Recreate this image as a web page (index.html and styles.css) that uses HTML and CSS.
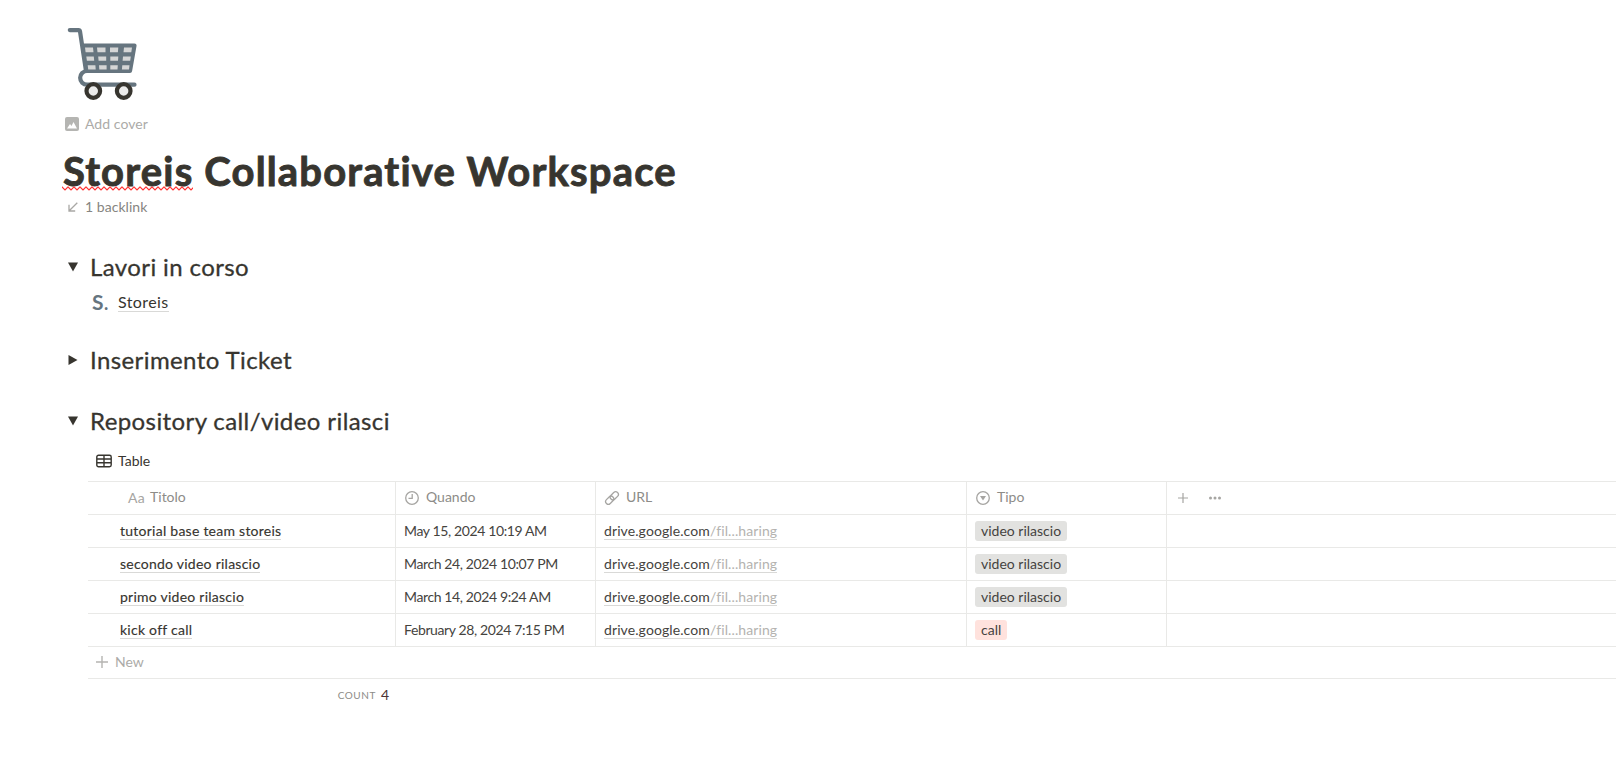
FILE: index.html
```html
<!DOCTYPE html>
<html lang="it">
<head>
<meta charset="utf-8">
<title>Storeis Collaborative Workspace</title>
<link rel="stylesheet" href="styles.css">
</head>
<body>
<main class="page">
  <svg class="cart" viewBox="0 0 76 76" fill="none">
    <path d="M19 20H70.500L66.500 45H21Z" fill="#66757f"/>
    <path d="M5.800 4.100H14.500Q15.800 4.100 16 5.400L22 45M18.500 19.500H70.500L66 45H23A6.850 6.850 0 0 0 23 58.700H70.500" stroke="#66757f" stroke-width="4.200" stroke-linecap="round" stroke-linejoin="round"/>
    <path d="M21 21.500h8l.5 4.800h-7.900zM33 21.500h8.500v4.800h-8zM46 21.500h8.300l-.4 4.800h-7.900zM60 21.500h8l-.7 4.800h-7.800zM22.300 30.400h7.500l.4 4.300h-7.300zM34.200 30.400h8v4.300h-7.600zM46.300 30.400h8l-.3 4.300h-7.700zM59 30.400h7.800l-.6 4.300h-7.600zM23.700 39.200h7.700l.3 4.300h-7.500zM35 39.200h7.600v4.300h-7.300zM46.300 39.200h7.500l-.3 4.300h-7.200zM58.300 39.200h7.200l-.5 4.300h-7.100z" fill="#d5d6d6"/>
    <circle cx="29.300" cy="65" r="6.800" fill="#ebebea" stroke="#37352f" stroke-width="4.200"/>
    <circle cx="59.700" cy="65" r="6.800" fill="#ebebea" stroke="#37352f" stroke-width="4.200"/>
  </svg>

  <div class="cover">
    <svg class="i14" viewBox="0 0 14 14"><rect width="14" height="14" rx="2" fill="#b5b5b2"/><path d="M2 11.500L5 7L6.500 9L8.500 5L12 11.500Z" fill="#fff"/></svg>
    <span>Add cover</span>
  </div>

  <h1 class="title"><span class="typo">Storeis<svg class="wave" viewBox="0 0 131 5" fill="none"><defs><pattern id="zig" width="6" height="5" patternUnits="userSpaceOnUse"><path d="M-1 0L0 1L3 4L6 1L7 0" stroke="#f33" stroke-width="1.200" fill="none"/></pattern></defs><rect width="131" height="5" fill="url(#zig)"/></svg></span> <span class="rest">Collaborative Workspace</span></h1>

  <div class="backlink">
    <svg class="i10" viewBox="0 0 10 10" fill="none" stroke="#a9a8a5" stroke-width="1.300"><path d="M9.300.7L1.200 8.800M1 2.800V9H7.200"/></svg>
    <span>1 backlink</span>
  </div>

  <div class="toggle t1"><svg class="arrow" viewBox="0 0 10 10"><path d="M0 .5H10L5 9.500Z" fill="#37352f"/></svg><h2 class="h">Lavori in corso</h2></div>
  <div class="pagelink"><b class="logo">S<i class="dot">.</i></b><span class="link">Storeis</span></div>
  <div class="toggle t2"><svg class="arrow" viewBox="0 0 10 10"><path d="M.5 0V10L9.500 5Z" fill="#37352f"/></svg><h2 class="h">Inserimento Ticket</h2></div>
  <div class="toggle t3"><svg class="arrow" viewBox="0 0 10 10"><path d="M0 .5H10L5 9.500Z" fill="#37352f"/></svg><h2 class="h">Repository call/video rilasci</h2></div>

  <section class="db">
    <div class="tab">
      <svg class="i16" viewBox="0 0 16 13" fill="none" stroke="#37352f" stroke-width="1.400"><rect x=".8" y=".8" width="14.400" height="11.400" rx="1.700"/><path d="M1 4.500H15M1 8.300H15M8 1V12"/></svg>
      <span>Table</span>
    </div>
    <div class="row head">
      <div class="c c1"><span class="aa">Aa</span><span>Titolo</span></div>
      <div class="c"><svg class="i14" viewBox="0 0 14 14" fill="none" stroke="#a6a5a2" stroke-width="1.300"><circle cx="7" cy="7" r="6.300"/><path d="M7.200 3V7.300H3.500"/></svg><span>Quando</span></div>
      <div class="c link-col"><svg class="i16" viewBox="0 0 16 16" fill="none" stroke="#a6a5a2" stroke-width="1.300"><rect x="-4.600" y="-2.700" width="9.200" height="5.400" rx="2.700" transform="translate(5.700 10.200) rotate(-45)"/><rect x="-4.600" y="-2.700" width="9.200" height="5.400" rx="2.700" transform="translate(10.300 5.800) rotate(-45)"/></svg><span>URL</span></div>
      <div class="c"><svg class="i14" viewBox="0 0 14 14"><circle cx="7" cy="7" r="6.300" fill="none" stroke="#a6a5a2" stroke-width="1.300"/><path d="M4 5H10L7 9.500Z" fill="#a6a5a2"/></svg><span>Tipo</span></div>
      <div class="c tools"><svg class="i10" viewBox="0 0 10 10" stroke="#a6a5a2" stroke-width="1.200"><path d="M5 0V10M0 5H10"/></svg><svg class="dots" viewBox="0 0 12 4" fill="#a6a5a2"><circle cx="1.500" cy="2" r="1.500"/><circle cx="6" cy="2" r="1.500"/><circle cx="10.500" cy="2" r="1.500"/></svg></div>
    </div>
    <div class="row"><div class="c name"><span class="link">tutorial base team storeis</span></div><div class="c date">May 15, 2024 10:19 AM</div><div class="c url"><span class="link">drive.google.com<span class="dim">/fil...haring</span></span></div><div class="c"><span class="tag">video rilascio</span></div><div class="c"></div></div>
    <div class="row"><div class="c name"><span class="link">secondo video rilascio</span></div><div class="c date">March 24, 2024 10:07 PM</div><div class="c url"><span class="link">drive.google.com<span class="dim">/fil...haring</span></span></div><div class="c"><span class="tag">video rilascio</span></div><div class="c"></div></div>
    <div class="row"><div class="c name"><span class="link">primo video rilascio</span></div><div class="c date">March 14, 2024 9:24 AM</div><div class="c url"><span class="link">drive.google.com<span class="dim">/fil...haring</span></span></div><div class="c"><span class="tag">video rilascio</span></div><div class="c"></div></div>
    <div class="row"><div class="c name"><span class="link">kick off call</span></div><div class="c date">February 28, 2024 7:15 PM</div><div class="c url"><span class="link">drive.google.com<span class="dim">/fil...haring</span></span></div><div class="c"><span class="tag red">call</span></div><div class="c"></div></div>
    <div class="new"><svg class="i12" viewBox="0 0 12 12" stroke="#b5b4b1" stroke-width="1.400"><path d="M6 0V12M0 6H12"/></svg><span>New</span></div>
    <div class="count"><span class="label">COUNT</span><span class="total">4</span></div>
  </section>
</main>
</body>
</html>
```
FILE: styles.css
```css
* { box-sizing: border-box; }
body { margin: 0; background: #fff; color: #37352f; font: 14px/20px Lato, "Liberation Sans", sans-serif; overflow: hidden; }
.page { height: 778px; padding: 26px 0 0 64px; white-space: nowrap; }
svg { display: block; flex: none; }
.cart { width: 76px; height: 76px; }
.i10 { width: 10px; height: 10px; }
.i12 { width: 12px; height: 12px; }
.i14 { width: 14px; height: 14px; }
.i16 { width: 16px; height: 16px; }
.dots { width: 12px; height: 4px; }

.cover { display: flex; align-items: center; gap: 6px; height: 20px; margin: 12px 0 0 1px; color: #acaba8; letter-spacing: .05px; }
.title { margin: 13px 0 0 -1px; font-size: 40px; line-height: 48px; font-weight: 700; height: 48px; letter-spacing: 1.17px; -webkit-text-stroke: .9px #37352f; }
.typo { position: relative; }
.wave { position: absolute; left: -1px; bottom: 4px; width: 131px; height: 5px; }
.backlink { display: flex; align-items: center; gap: 7px; height: 20px; margin: 2px 0 0 4px; color: #868581; letter-spacing: .05px; }

.toggle { display: flex; align-items: center; gap: 12px; height: 32px; padding-left: 4px; }
.arrow { width: 10px; height: 10px; margin-bottom: 1px; }
.h { margin: 0; font-size: 24px; line-height: 32px; font-weight: 400; letter-spacing: .4px; -webkit-text-stroke: .3px #37352f; }
.t1 { margin-top: 34px; }
.t2 { margin-top: 23px; }
.t3 { margin-top: 29px; }
.pagelink { display: flex; align-items: center; gap: 9px; height: 38px; padding-left: 28px; font-size: 16px; letter-spacing: .4px; }
.logo { width: 17px; color: #66757f; font-size: 21px; line-height: 30px; }
.dot { font-style: normal; font-size: 18px; }
.link { border-bottom: 1px solid #d9d9d7; }
.pagelink .link { line-height: 18px; }

.db { margin: 13px 0 0 24px; }
.tab { display: flex; align-items: center; gap: 6px; height: 31px; padding: 0 0 9px 8px; }
.row { display: grid; grid-template-columns: 308px 200px 371px 200px 1fr; grid-template-rows: 32px; height: 33px; border-top: 1px solid #e9e9e7; }
.row .c { display: flex; align-items: center; padding: 0 0 0 8px; border-right: 1px solid #e9e9e7; }
.row .c:last-child { border-right: 0; }
.head .c { gap: 7px; color: #8d8c88; padding: 0 0 2px 9px; }
.head .c svg { margin-top: 2px; }
.head .link-col { gap: 6px; padding-left: 8px; }
.head .c1 { padding-left: 40px; gap: 5px; }
.head .tools { gap: 21px; padding-left: 11px; }
.aa { color: #a6a5a2; letter-spacing: .3px; padding-top: 2px; }
.row .name { padding-left: 32px; letter-spacing: .25px; -webkit-text-stroke: .15px #37352f; }
.date { letter-spacing: -.38px; color: #45433e; }
.url { letter-spacing: .1px; color: #45433e; }
.row .link { line-height: 16px; }
.dim { color: #b4b3b0; }
.tag { height: 20px; padding: 0 6px; border-radius: 3px; background: #e2e2e0; color: #45433f; }
.red { background: #ffe2dd; }
.new { display: flex; align-items: center; gap: 7px; height: 33px; padding: 0 0 2px 8px; border: solid #e9e9e7; border-width: 1px 0; color: #acaba8; }
.count { display: flex; justify-content: flex-end; align-items: center; gap: 5px; width: 301px; height: 31px; }
.label { font-size: 10px; letter-spacing: .55px; color: #8d8c88; }
.total { color: #4d3434; }
```
